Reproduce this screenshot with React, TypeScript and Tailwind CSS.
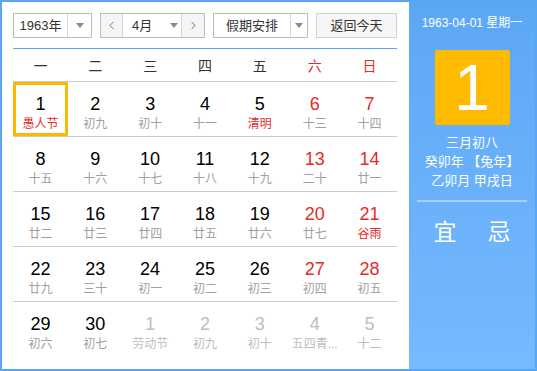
import { ChevronLeft, ChevronRight } from 'lucide-react'

type Day = {
    num: number
    lunar: string
    red?: boolean
    festival?: boolean
    other?: boolean
    selected?: boolean
}

const weekdays = ['一', '二', '三', '四', '五', '六', '日']

const rows: Day[][] = [
    [
        { num: 1, lunar: '愚人节', festival: true, selected: true },
        { num: 2, lunar: '初九' },
        { num: 3, lunar: '初十' },
        { num: 4, lunar: '十一' },
        { num: 5, lunar: '清明', festival: true },
        { num: 6, lunar: '十三', red: true },
        { num: 7, lunar: '十四', red: true },
    ],
    [
        { num: 8, lunar: '十五' },
        { num: 9, lunar: '十六' },
        { num: 10, lunar: '十七' },
        { num: 11, lunar: '十八' },
        { num: 12, lunar: '十九' },
        { num: 13, lunar: '二十', red: true },
        { num: 14, lunar: '廿一', red: true },
    ],
    [
        { num: 15, lunar: '廿二' },
        { num: 16, lunar: '廿三' },
        { num: 17, lunar: '廿四' },
        { num: 18, lunar: '廿五' },
        { num: 19, lunar: '廿六' },
        { num: 20, lunar: '廿七', red: true },
        { num: 21, lunar: '谷雨', red: true, festival: true },
    ],
    [
        { num: 22, lunar: '廿九' },
        { num: 23, lunar: '三十' },
        { num: 24, lunar: '初一' },
        { num: 25, lunar: '初二' },
        { num: 26, lunar: '初三' },
        { num: 27, lunar: '初四', red: true },
        { num: 28, lunar: '初五', red: true },
    ],
    [
        { num: 29, lunar: '初六' },
        { num: 30, lunar: '初七' },
        { num: 1, lunar: '劳动节', other: true },
        { num: 2, lunar: '初九', other: true },
        { num: 3, lunar: '初十', other: true },
        { num: 4, lunar: '五四青...', other: true },
        { num: 5, lunar: '十二', other: true },
    ],
]

const Caret = () => (
    <span className="w-0 h-0 border-l-[4px] border-r-[4px] border-t-[5px] border-l-transparent border-r-transparent border-t-[#8a8a8a]" />
)

const DayCell: React.FC<{ day: Day }> = ({ day }) => {
    const numColor = day.other ? 'text-[#bdbdbd]' : day.red ? 'text-[#e52a2a]' : 'text-black'
    const lunarColor = day.other ? 'text-[#bdbdbd]' : day.festival ? 'text-[#e52a2a]' : 'text-[#a0a0a0]'
    return (
        <div className={`h-[54px] flex flex-col items-center ${day.selected ? 'border-[3px] border-[#ffb800] pt-[8px]' : 'pt-[11px]'}`}>
            <span className={`text-[18px] leading-[22px] ${numColor}`}>{day.num}</span>
            <span className={`text-[12px] leading-[16px] mt-[1px] whitespace-nowrap ${lunarColor}`}>{day.lunar}</span>
        </div>
    )
}

export default function App() {
    return (
        <div className="w-[537px] h-[371px] flex border-2 border-[#5aa6f5] bg-white" style={{ fontFamily: '"Liberation Sans", "Noto Sans CJK SC", sans-serif' }}>
            <div className="w-[407px] pl-[11px] pr-[12px] pt-[11px]">
                <div className="flex justify-between h-[25px] text-[13px] text-[#333]">
                    <div className="w-[79px] flex border border-[#bdbdbd] bg-white">
                        <span className="flex-1 flex items-center justify-center">1963年</span>
                        <span className="w-[24px] flex items-center justify-center border-l border-[#d6d6d6]"><Caret /></span>
                    </div>
                    <div className="w-[105px] flex border border-[#bdbdbd] bg-white">
                        <span className="w-[22px] flex items-center justify-center bg-[#f5f5f5] border-r border-[#d6d6d6] text-[#555]"><ChevronLeft size={13} strokeWidth={1.5} /></span>
                        <span className="flex-1 flex items-center pl-[9px] gap-[18px]">4月<Caret /></span>
                        <span className="w-[23px] flex items-center justify-center bg-[#f5f5f5] border-l border-[#d6d6d6] text-[#555]"><ChevronRight size={13} strokeWidth={1.5} /></span>
                    </div>
                    <div className="w-[95px] flex border border-[#bdbdbd] bg-white">
                        <span className="flex-1 flex items-center justify-center">假期安排</span>
                        <span className="w-[17px] flex items-center justify-center border-l border-[#d6d6d6]"><Caret /></span>
                    </div>
                    <div className="w-[81px] flex items-center justify-center border border-[#d2d2d2] bg-[#f6f6f6]">返回今天</div>
                </div>

                <div className="mt-[10px] h-[1px] bg-[#5aa6f5]" />

                <div className="grid grid-cols-7 h-[33px] border-b border-[#cccccc] text-[14px]">
                    {weekdays.map((w, i) => (
                        <div key={w} className={`flex items-center justify-center pt-[2px] ${i > 4 ? 'text-[#e52a2a]' : 'text-[#333]'}`}>{w}</div>
                    ))}
                </div>

                {rows.map((row, ri) => (
                    <div key={ri} className={`grid grid-cols-7 ${ri < rows.length - 1 ? 'border-b border-[#cccccc]' : ''}`}>
                        {row.map((day, di) => <DayCell key={di} day={day} />)}
                    </div>
                ))}
            </div>

            <div className="flex-1 flex flex-col items-center text-white bg-gradient-to-b from-[#5ca7f5] to-[#76baff]">
                <p className="mt-[13px] text-[12px] leading-[16px]">1963-04-01 星期一</p>
                <div className="mt-[19px] w-[75px] h-[75px] rounded-[3px] bg-[#ffbb00] flex items-center justify-center text-[64px] leading-none">1</div>
                <p className="mt-[8px] text-[13px] leading-[19px]">三月初八</p>
                <p className="text-[13px] leading-[19px]">癸卯年 【兔年】</p>
                <p className="text-[13px] leading-[19px]">乙卯月 甲戌日</p>
                <div className="mt-[10px] w-[110px] h-[2px] bg-[#a6d0fb]" />
                <div className="mt-[16px] flex gap-[31px] text-[23px] leading-[28px]">
                    <span>宜</span>
                    <span>忌</span>
                </div>
            </div>
        </div>
    )
}
